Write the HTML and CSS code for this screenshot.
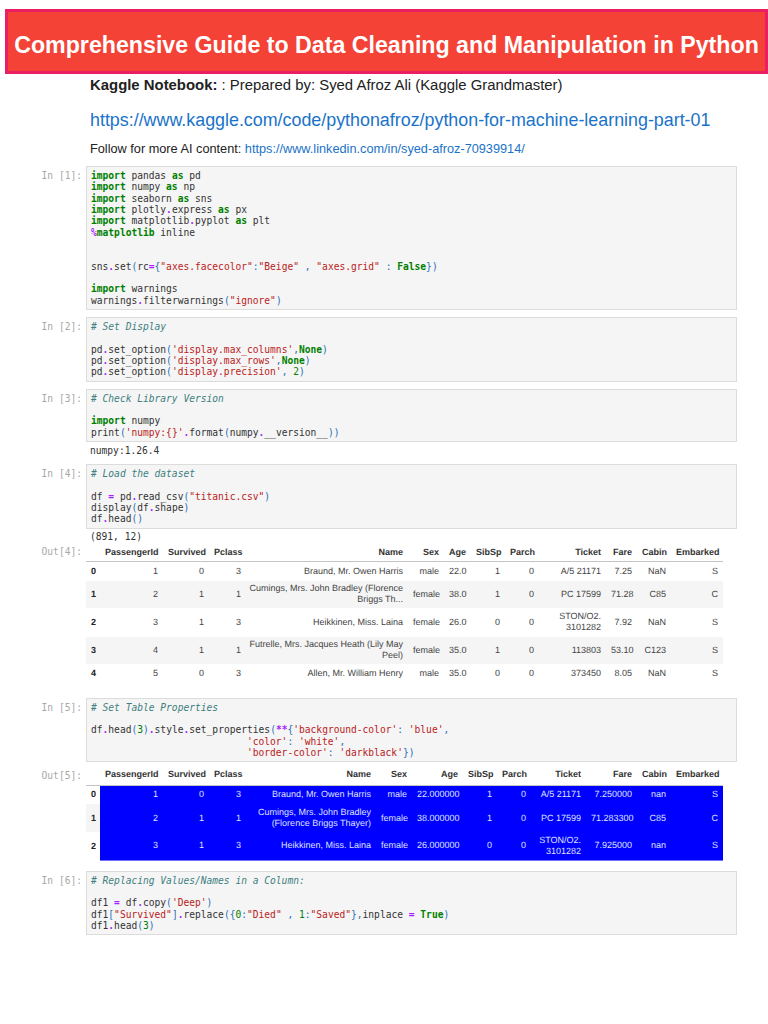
FILE: index.html
```html
<!DOCTYPE html>
<html lang="en">
<head>
<meta charset="utf-8">
<title>Comprehensive Guide to Data Cleaning and Manipulation in Python</title>
<link rel="stylesheet" href="styles.css">
</head>
<body>
<header class="banner"><h1>Comprehensive Guide to Data Cleaning and Manipulation in Python</h1></header>
<section class="intro">
<p class="lead"><b>Kaggle Notebook:</b> : Prepared by: Syed Afroz Ali (Kaggle Grandmaster)</p>
<p class="biglink"><a href="#">https://www.kaggle.com/code/pythonafroz/python-for-machine-learning-part-01</a></p>
<p class="follow">Follow for more AI content: <a href="#">https://www.linkedin.com/in/syed-afroz-70939914/</a></p>
</section>
<main class="nb">
<div class="cell c1"><div class="prompt">In [1]:</div><pre class="input"><span class="k">import</span> pandas <span class="k">as</span> pd
<span class="k">import</span> numpy <span class="k">as</span> np
<span class="k">import</span> seaborn <span class="k">as</span> sns
<span class="k">import</span> plotly<span class="o">.</span>express <span class="k">as</span> px
<span class="k">import</span> matplotlib<span class="o">.</span>pyplot <span class="k">as</span> plt
<span class="o">%</span><span class="k">matplotlib</span> inline


sns<span class="o">.</span>set<span class="p">(</span>rc<span class="o">=</span><span class="p">{</span><span class="s">"axes.facecolor"</span><span class="p">:</span><span class="s">"Beige"</span> <span class="p">,</span> <span class="s">"axes.grid"</span> <span class="p">:</span> <span class="k">False</span><span class="p">})</span>

<span class="k">import</span> warnings
warnings<span class="o">.</span>filterwarnings<span class="p">(</span><span class="s">"ignore"</span><span class="p">)</span></pre></div>

<div class="cell c2"><div class="prompt">In [2]:</div><pre class="input"><span class="c"># Set Display</span>

pd<span class="o">.</span>set_option<span class="p">(</span><span class="s">'display.max_columns'</span><span class="p">,</span><span class="k">None</span><span class="p">)</span>
pd<span class="o">.</span>set_option<span class="p">(</span><span class="s">'display.max_rows'</span><span class="p">,</span><span class="k">None</span><span class="p">)</span>
pd<span class="o">.</span>set_option<span class="p">(</span><span class="s">'display.precision'</span><span class="p">,</span> <span class="n">2</span><span class="p">)</span></pre></div>

<div class="cell c2"><div class="prompt">In [3]:</div><pre class="input"><span class="c"># Check Library Version</span>

<span class="k">import</span> numpy
print<span class="p">(</span><span class="s">'numpy:{}'</span><span class="o">.</span>format<span class="p">(</span>numpy<span class="o">.</span>__version__<span class="p">))</span></pre></div>
<div class="cell"><div class="prompt"></div><pre class="output out-a">numpy:1.26.4</pre></div>

<div class="cell"><div class="prompt">In [4]:</div><pre class="input"><span class="c"># Load the dataset</span>

df <span class="o">=</span> pd<span class="o">.</span>read_csv<span class="p">(</span><span class="s">"titanic.csv"</span><span class="p">)</span>
display<span class="p">(</span>df<span class="o">.</span>shape<span class="p">)</span>
df<span class="o">.</span>head<span class="p">()</span></pre></div>
<div class="cell"><div class="prompt"></div><pre class="output out-b">(891, 12)</pre></div>
<div class="cell"><div class="prompt out">Out[4]:</div>
<table class="df df1">
<thead><tr><th class="w0"></th><th class="w1">PassengerId</th><th class="w2">Survived</th><th class="w3">Pclass</th><th class="w4">Name</th><th class="w5">Sex</th><th class="w6">Age</th><th class="w7">SibSp</th><th class="w8">Parch</th><th class="w9">Ticket</th><th class="w10">Fare</th><th class="w11">Cabin</th><th class="w12">Embarked</th></tr></thead>
<tbody>
<tr class="r19"><th>0</th><td>1</td><td>0</td><td>3</td><td>Braund, Mr. Owen Harris</td><td>male</td><td>22.0</td><td>1</td><td>0</td><td>A/5 21171</td><td>7.25</td><td>NaN</td><td>S</td></tr>
<tr class="r27"><th>1</th><td>2</td><td>1</td><td>1</td><td>Cumings, Mrs. John Bradley (Florence Briggs Th...</td><td>female</td><td>38.0</td><td>1</td><td>0</td><td>PC 17599</td><td>71.28</td><td>C85</td><td>C</td></tr>
<tr class="r29"><th>2</th><td>3</td><td>1</td><td>3</td><td>Heikkinen, Miss. Laina</td><td>female</td><td>26.0</td><td>0</td><td>0</td><td>STON/O2. 3101282</td><td>7.92</td><td>NaN</td><td>S</td></tr>
<tr class="r27"><th>3</th><td>4</td><td>1</td><td>1</td><td>Futrelle, Mrs. Jacques Heath (Lily May Peel)</td><td>female</td><td>35.0</td><td>1</td><td>0</td><td>113803</td><td>53.10</td><td>C123</td><td>S</td></tr>
<tr class="r19"><th>4</th><td>5</td><td>0</td><td>3</td><td>Allen, Mr. William Henry</td><td>male</td><td>35.0</td><td>0</td><td>0</td><td>373450</td><td>8.05</td><td>NaN</td><td>S</td></tr>
</tbody>
</table></div>

<div class="cell c5"><div class="prompt">In [5]:</div><pre class="input"><span class="c"># Set Table Properties</span>

df<span class="o">.</span>head<span class="p">(</span><span class="n">3</span><span class="p">)</span><span class="o">.</span>style<span class="o">.</span>set_properties<span class="p">(</span><span class="o">**</span><span class="p">{</span><span class="s">'background-color'</span><span class="p">:</span> <span class="s">'blue'</span><span class="p">,</span>
                           <span class="s">'color'</span><span class="p">:</span> <span class="s">'white'</span><span class="p">,</span>
                           <span class="s">'border-color'</span><span class="p">:</span> <span class="s">'darkblack'</span><span class="p">})</span></pre></div>
<div class="cell c5o"><div class="prompt out">Out[5]:</div>
<table class="df df2">
<thead><tr><th class="w0"></th><th class="w1">PassengerId</th><th class="w2">Survived</th><th class="w3">Pclass</th><th class="x4">Name</th><th class="w5">Sex</th><th class="x6">Age</th><th class="w7">SibSp</th><th class="w8">Parch</th><th class="x9">Ticket</th><th class="x10">Fare</th><th class="w11">Cabin</th><th class="w12">Embarked</th></tr></thead>
<tbody>
<tr class="r19"><th>0</th><td>1</td><td>0</td><td>3</td><td>Braund, Mr. Owen Harris</td><td>male</td><td>22.000000</td><td>1</td><td>0</td><td>A/5 21171</td><td>7.250000</td><td>nan</td><td>S</td></tr>
<tr class="r28"><th>1</th><td>2</td><td>1</td><td>1</td><td>Cumings, Mrs. John Bradley (Florence Briggs Thayer)</td><td>female</td><td>38.000000</td><td>1</td><td>0</td><td>PC 17599</td><td>71.283300</td><td>C85</td><td>C</td></tr>
<tr class="r28"><th>2</th><td>3</td><td>1</td><td>3</td><td>Heikkinen, Miss. Laina</td><td>female</td><td>26.000000</td><td>0</td><td>0</td><td>STON/O2. 3101282</td><td>7.925000</td><td>nan</td><td>S</td></tr>
</tbody>
</table></div>

<div class="cell c6"><div class="prompt">In [6]:</div><pre class="input"><span class="c"># Replacing Values/Names in a Column:</span>

df1 <span class="o">=</span> df<span class="o">.</span>copy<span class="p">(</span><span class="s">'Deep'</span><span class="p">)</span>
df1<span class="p">[</span><span class="s">"Survived"</span><span class="p">]</span><span class="o">.</span>replace<span class="p">({</span><span class="n">0</span><span class="p">:</span><span class="s">"Died"</span> <span class="p">,</span> <span class="n">1</span><span class="p">:</span><span class="s">"Saved"</span><span class="p">},</span>inplace <span class="o">=</span> <span class="k">True</span><span class="p">)</span>
df1<span class="o">.</span>head<span class="p">(</span><span class="n">3</span><span class="p">)</span></pre></div>
</main>
</body>
</html>
```
FILE: styles.css
```css
* { box-sizing: border-box; }
html, body { margin: 0; padding: 0; background: #fff; }
body { width: 768px; height: 1024px; overflow: hidden; font-family: "Liberation Sans", Arial, sans-serif; color: #222; }

.banner { margin: 9px 0 0 5px; height: 65px; background: #f44336; border: 3px solid #e91e63; display: flex; align-items: center; justify-content: center; padding: 8px 0 0 0; }
.banner h1 { margin: 0; color: #fff; font-size: 23.2px; font-weight: 700; white-space: nowrap; }

.intro { margin-left: 90px; }
.intro p { margin: 0; white-space: nowrap; }
.intro a { color: #1a73c8; text-decoration: none; }
.lead { font-size: 14.9px; line-height: 20px; padding-top: 1px; }
.biglink { font-size: 17.86px; line-height: 24px; padding-top: 13px; }
.follow { font-size: 12.72px; line-height: 16px; padding-top: 9px; }

.nb { padding-top: 9px; padding-right: 31px; }
.cell { display: flex; align-items: flex-start; }
.prompt { flex: 0 0 86px; padding: 4px 4px 0 0; text-align: right; font: 9.6px/11.33px "DejaVu Sans Mono", monospace; color: #a8a8a8; white-space: pre; }
.prompt.out { padding-top: 1.5px; }
.c5o .prompt.out { padding-top: 6px; }
.input, .output { margin: 0; flex: 1; font: 9.6px/11.33px "DejaVu Sans Mono", monospace; color: #333; }
.input { background: #f5f5f5; border: 1px solid #dcdcdc; padding: 3px 4px; }
.output { padding: 0 4px; }
.out-a { padding-top: 3px; height: 22px; }
.out-b { padding-top: 2px; height: 16px; }

.c1 { margin-bottom: 7px; }
.c2 + .c2 { margin-top: 7px; }
.c5 { margin-top: 15px; }
.c5o { margin-top: 2px; }
.c6 { margin-top: 10px; }

.k { color: #008000; font-weight: 700; }
.o { color: #aa22ff; font-weight: 700; }
.s { color: #ba2121; }
.c { color: #408080; font-style: italic; }
.n { color: #008000; }
.p { color: #2a6fb5; }

.df { width: 637px; table-layout: fixed; border-collapse: collapse; font-size: 9px; line-height: 11px; color: #444; text-rendering: geometricPrecision; }
.df th, .df td { padding: 0 5px; text-align: right; font-weight: 400; }
.df thead th { font-weight: 700; color: #333; height: 17px; border-bottom: 1px solid #c4c4c4; vertical-align: middle; }
.df tbody th { font-weight: 700; color: #222; text-align: left; }
.df1 tbody tr:nth-child(even) { background: #f5f5f5; }
.df1 td:nth-child(5) { padding-left: 0; }
.df2 tbody tr:nth-child(even) th { background: #f5f5f5; }
.df2 td { background: #0000ff; color: #dfe3ff; }
.df2 tbody tr:last-child td { border-bottom: 1px solid #6f6fff; }
.df2 thead th { height: 21px; border-bottom: 1px solid #c4c4c4; }
.df2 tbody th { padding-right: 0; }

.r19 { height: 19px; }
.r27 { height: 27px; }
.r28 { height: 28px; }
.r29 { height: 29px; }

.w0 { width: 14px; }
.w1 { width: 63px; }
.w2 { width: 46px; }
.w3 { width: 37px; }
.w4 { width: 162px; }
.w5 { width: 36px; }
.w6 { width: 27px; }
.w7 { width: 34px; }
.w8 { width: 34px; }
.w9 { width: 67px; }
.w10 { width: 31px; }
.w11 { width: 34px; }
.w12 { width: 52px; }
.x4 { width: 130px; }
.x6 { width: 51px; }
.x9 { width: 55px; }
.x10 { width: 51px; }
```
